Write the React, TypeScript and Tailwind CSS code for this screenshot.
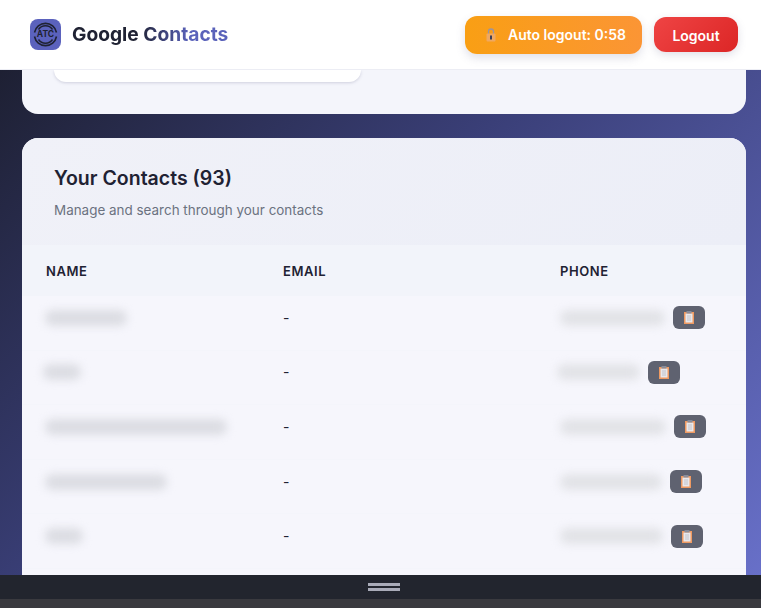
const contacts = [
  { nameWidth: 80, nameOffset: -1, phoneWidth: 105, phoneOffset: 0 },
  { nameWidth: 36, nameOffset: -3, phoneWidth: 83, phoneOffset: -3 },
  { nameWidth: 180, nameOffset: -1, phoneWidth: 106, phoneOffset: 0 },
  { nameWidth: 120, nameOffset: -1, phoneWidth: 102, phoneOffset: 0 },
  { nameWidth: 36, nameOffset: -1, phoneWidth: 103, phoneOffset: 0 },
];

function AtcLogo() {
  return (
    <div className="w-[31px] h-[31px] rounded-lg bg-[#5b62bd] flex items-center justify-center shrink-0">
      <svg width="27" height="27" viewBox="0 0 27 27" fill="none" stroke="#1f2233">
        <path d="M2.5 11.5a11.2 11.2 0 0 1 22 0M2.5 15.5a11.2 11.2 0 0 0 22 0" strokeWidth="1.6" />
        <path d="M6.5 8.5a8.4 8.4 0 0 1 14 0M6.5 18.5a8.4 8.4 0 0 0 14 0" strokeWidth="1.4" />
        <text x="13.5" y="16.4" textAnchor="middle" fontSize="8.5" fontWeight="700" fill="#1f2233" stroke="none" fontFamily="Inter, sans-serif">
          ATC
        </text>
      </svg>
    </div>
  );
}

function LockIcon() {
  return (
    <svg width="10" height="14" viewBox="0 0 10 14" className="shrink-0">
      <path d="M2.5 6V3.5a2.5 2.5 0 0 1 5 0V6" fill="none" stroke="#9a94a0" strokeWidth="1.3" />
      <rect x="0.5" y="5.5" width="9" height="8" rx="1" fill="#f0a860" />
      <rect x="4" y="7.5" width="2" height="4" fill="#3d4058" />
    </svg>
  );
}

function ClipboardIcon() {
  return (
    <svg width="10" height="13" viewBox="0 0 10 13">
      <rect x="0" y="1" width="10" height="12" fill="#ef9a62" />
      <rect x="1.5" y="2.5" width="7" height="9" fill="#e8e8ec" />
      <rect x="2.5" y="0" width="5" height="2.5" fill="#8a8d9a" />
      <path d="M3 5h4M3 7h4M3 9h4" stroke="#b9bac4" strokeWidth="0.8" />
    </svg>
  );
}

export default function App() {
  return (
    <div className="h-[608px] w-[761px] overflow-hidden flex flex-col bg-[linear-gradient(135deg,#1a1c2a_0%,#3a3f78_45%,#6a72cc_100%)] font-['Inter',sans-serif]">
      {/* Header */}
      <header className="h-[70px] shrink-0 bg-white border-b border-[#ecedf4] flex items-center justify-between pl-[30px] pr-[23px]">
        <div className="flex items-center gap-[11px]">
          <AtcLogo />
          <span className="text-[19.2px] font-bold bg-[linear-gradient(90deg,#1f2233_42%,#5a62ba_75%)] bg-clip-text text-transparent">
            Google Contacts
          </span>
        </div>
        <div className="flex items-center gap-3">
          <div className="h-[38px] w-[177px] rounded-xl bg-[linear-gradient(90deg,#f99f14,#fb9535)] shadow-[0_4px_10px_rgba(100,100,140,0.2)] flex items-center pl-[21px] gap-3 text-white text-sm font-semibold">
            <LockIcon />
            <span>Auto logout: 0:58</span>
          </div>
          <button className="h-[35px] w-[84px] rounded-xl bg-[linear-gradient(135deg,#ef4444,#dc2626)] shadow-[0_3px_8px_rgba(100,100,140,0.2)] text-white text-[14px] font-semibold pt-0.5">
            Logout
          </button>
        </div>
      </header>

      {/* Page content */}
      <main className="flex-1 min-h-0 px-[22px] pr-[15px] flex flex-col gap-6 overflow-hidden">
        <section className="h-[44px] shrink-0 rounded-b-2xl bg-[#f4f5fb] px-8">
          <div className="h-3 w-[307px] rounded-b-xl bg-white shadow-[0_1px_3px_rgba(100,100,140,0.25)]" />
        </section>

        <section className="flex-1 min-h-0 rounded-t-2xl bg-[#f6f6fc] overflow-hidden">
          <div className="h-[107px] bg-[linear-gradient(135deg,#f0f1f8,#eceef7)] pt-[26px] px-8">
            <h2 className="text-[19.5px] leading-[28px] font-semibold text-[#1f2233]">Your Contacts (93)</h2>
            <p className="mt-2 text-[13.45px] leading-5 text-[#6b7280]">Manage and search through your contacts</p>
          </div>

          <div className="h-[51px] bg-[#f2f4fa] grid grid-cols-[237px_277px_1fr] items-center px-6 pt-0.5 text-[13px] font-semibold tracking-[0.6px] text-[#1f2233]">
            <span>NAME</span>
            <span>EMAIL</span>
            <span>PHONE</span>
          </div>

          {contacts.map((contact, i) => (
            <div
              key={i}
              className="h-[54.6px] grid grid-cols-[237px_277px_1fr] items-center px-6 pb-[10px] border-b border-[#f4f5fb] text-sm text-[#1f2233]"
            >
              <div
                className="h-4 rounded-full bg-[#dcdde3] blur-[4px]"
                style={{ width: contact.nameWidth + 2, marginLeft: contact.nameOffset }}
              />
              <span>-</span>
              <div className="flex items-center gap-[8px]" style={{ marginLeft: contact.phoneOffset }}>
                <div className="h-4 rounded-full bg-[#e2e3e7] blur-[4px]" style={{ width: contact.phoneWidth }} />
                <button className="h-[23px] w-8 rounded-md bg-[#5f6270] flex items-center justify-center">
                  <ClipboardIcon />
                </button>
              </div>
            </div>
          ))}
        </section>
      </main>

      {/* Resize bar */}
      <div className="h-6 shrink-0 bg-[#22252e] flex flex-col items-center justify-center gap-[2px] pl-[6px]">
        <div className="h-[3px] w-[32px] bg-[#a9abb8]" />
        <div className="h-[3px] w-[32px] bg-[#a9abb8]" />
      </div>
      <div className="h-[9px] shrink-0 bg-[#3a3a3f]" />
    </div>
  );
}
